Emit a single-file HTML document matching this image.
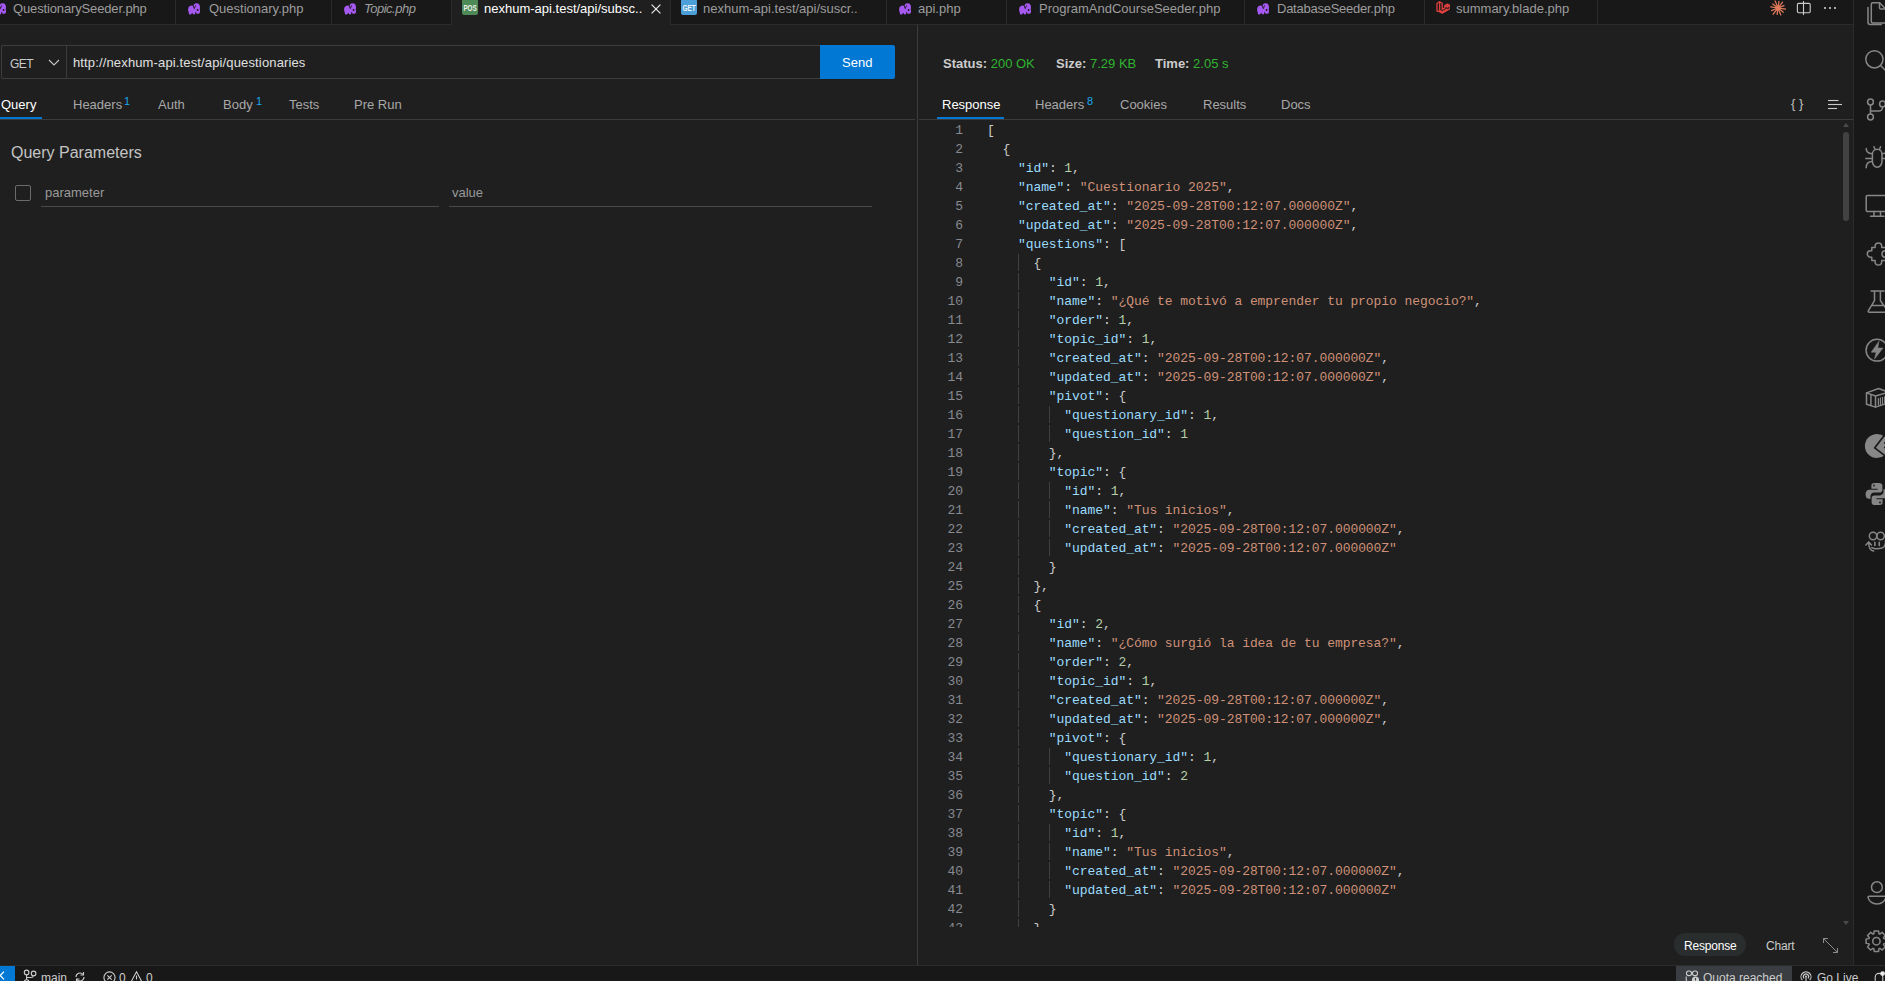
<!DOCTYPE html>
<html><head><meta charset="utf-8">
<style>
*{box-sizing:border-box;margin:0;padding:0}
html,body{width:1885px;height:981px;overflow:hidden;background:#1f1f1f;font-family:"Liberation Sans",sans-serif;font-size:13px;color:#cccccc}
.abs{position:absolute}
#tabs{position:absolute;left:0;top:0;width:1854px;height:25px;background:#181818;border-bottom:1px solid #2b2b2b}
.tab{position:absolute;top:0;height:24px;border-right:1px solid #2b2b2b;color:#9d9d9d;white-space:nowrap}
.tab .t{position:absolute;top:1px;line-height:16px}
.tab.active{background:#1f1f1f;height:25px;color:#ffffff}
.ico{position:absolute}
#act{position:absolute;left:1853px;top:0;width:32px;height:966px;background:#181818;border-left:1px solid #2b2b2b}
#status{position:absolute;left:0;top:965px;width:1885px;height:16px;background:#181818;border-top:1px solid #2b2b2b;color:#cccccc}
#divider{position:absolute;left:917px;top:25px;width:1px;height:940px;background:#3c3c3c}
.hline{position:absolute;height:1px;background:#3c3c3c}
.rtab{position:absolute;top:97px;line-height:16px;color:#a8a8a8;white-space:nowrap}
.rtab.on{color:#ffffff}
.sup{position:absolute;font-size:11px;line-height:12px;color:#1aa7ee}
#code{position:absolute;left:918px;top:121px;width:925px;height:806px;overflow:hidden;font-family:"Liberation Mono",monospace;font-size:13px;letter-spacing:-0.07px}
.ln{position:relative;height:19px;line-height:19px;white-space:pre;color:#cccccc}
.ln .no{position:absolute;left:0;width:45px;text-align:right;color:#878a91}
.ln .tx{position:absolute;left:69px}
.g{position:absolute;top:0;width:1px;height:17px;background:#404040}
.g1{left:100px}.g2{left:131px}
i{font-style:normal}
i.k{color:#9cdcfe}i.s{color:#ce9178}i.n{color:#b5cea8}
</style></head><body>
<div id="tabs">
  <div class="tab" style="left:0;width:176px"><svg class="ico" style="left:-6px;top:3px" width="12" height="12" viewBox="0 0 12 12"><use href="#eleph"/></svg><span class="t" style="left:13px;letter-spacing:-0.14px">QuestionarySeeder.php</span></div>
  <div class="tab" style="left:176px;width:156px"><svg class="ico" style="left:12px;top:3px" width="12" height="12"><use href="#eleph"/></svg><span class="t" style="left:33px">Questionary.php</span></div>
  <div class="tab" style="left:332px;width:120px"><svg class="ico" style="left:12px;top:3px" width="12" height="12"><use href="#eleph"/></svg><span class="t" style="left:32px;font-style:italic;letter-spacing:-0.5px">Topic.php</span></div>
  <div class="tab active" style="left:452px;width:219px"><svg class="ico" style="left:10px;top:0px" width="16" height="15"><rect x="0" y="-1" width="16" height="16" rx="2" fill="#4e8a57"/><text x="1.4" y="10.8" textLength="13.4" lengthAdjust="spacingAndGlyphs" font-family="Liberation Sans" font-weight="bold" font-size="9.4" fill="#eef3ee">POS</text></svg><span class="t" style="left:32px">nexhum-api.test/api/subsc..</span><svg class="ico" style="left:199px;top:4px" width="10" height="10" viewBox="0 0 10 10"><path d="M0.6 0.6l8.8 8.8M9.4 0.6L0.6 9.4" stroke="#e8e8e8" stroke-width="1.25"/></svg></div>
  <div class="tab" style="left:671px;width:216px"><svg class="ico" style="left:10px;top:0px" width="16" height="15"><rect x="0" y="-1" width="16" height="16" rx="2" fill="#4c9fd8"/><text x="1.4" y="10.8" textLength="13.4" lengthAdjust="spacingAndGlyphs" font-family="Liberation Sans" font-weight="bold" font-size="9.4" fill="#eef5fb">GET</text></svg><span class="t" style="left:32px">nexhum-api.test/api/suscr..</span></div>
  <div class="tab" style="left:887px;width:120px"><svg class="ico" style="left:12px;top:3px" width="12" height="12"><use href="#eleph"/></svg><span class="t" style="left:31px">api.php</span></div>
  <div class="tab" style="left:1007px;width:238px"><svg class="ico" style="left:12px;top:3px" width="12" height="12"><use href="#eleph"/></svg><span class="t" style="left:32px">ProgramAndCourseSeeder.php</span></div>
  <div class="tab" style="left:1245px;width:180px"><svg class="ico" style="left:12px;top:3px" width="12" height="12"><use href="#eleph"/></svg><span class="t" style="left:32px;letter-spacing:-0.25px">DatabaseSeeder.php</span></div>
  <div class="tab" style="left:1425px;width:173px"><svg class="ico" style="left:11px;top:1px" width="14" height="14"><use href="#laravel"/></svg><span class="t" style="left:31px">summary.blade.php</span></div>
  <svg class="ico" style="left:1769.5px;top:0px" width="16" height="16" viewBox="0 0 16 16"><g stroke="#e07a5a" stroke-width="1.25" stroke-linecap="round"><line x1="8" y1="8" x2="15.72" y2="9.09"/><line x1="8" y1="8" x2="13.36" y2="12.19"/><line x1="8" y1="8" x2="10.81" y2="14.95"/><line x1="8" y1="8" x2="7.10" y2="14.44"/><line x1="8" y1="8" x2="3.14" y2="14.23"/><line x1="8" y1="8" x2="1.60" y2="10.58"/><line x1="8" y1="8" x2="0.77" y2="6.98"/><line x1="8" y1="8" x2="2.80" y2="3.94"/><line x1="8" y1="8" x2="5.12" y2="0.86"/><line x1="8" y1="8" x2="8.93" y2="1.37"/><line x1="8" y1="8" x2="12.56" y2="2.17"/><line x1="8" y1="8" x2="13.93" y2="5.60"/></g><circle cx="8" cy="8" r="2.6" fill="#e07a5a"/></svg>
  <svg class="ico" style="left:1796px;top:0px" width="16" height="16" viewBox="0 0 16 16"><rect x="1.4" y="3.4" width="12.8" height="9.4" rx="1.2" fill="none" stroke="#cccccc" stroke-width="1.1"/><line x1="7.5" y1="1" x2="7.5" y2="15" stroke="#cccccc" stroke-width="1.1"/></svg>
  <svg class="ico" style="left:1822px;top:2px" width="16" height="12" viewBox="0 0 16 12"><circle cx="3" cy="6" r="1.1" fill="#cccccc"/><circle cx="8" cy="6" r="1.1" fill="#cccccc"/><circle cx="13" cy="6" r="1.1" fill="#cccccc"/></svg>
</div>
<svg width="0" height="0" style="position:absolute">
  <defs>
    <g id="eleph"><g fill="#a659f0"><ellipse cx="4.2" cy="6.4" rx="4.1" ry="3.9"/><ellipse cx="8.6" cy="4.6" rx="3.4" ry="4.4"/><rect x="8.6" y="6" width="3.4" height="4" rx="1.6"/><rect x="8" y="8.4" width="3.6" height="2.4" rx="1.2"/><rect x="0.8" y="7" width="2.8" height="4.4" rx="0.8"/><rect x="4.9" y="7" width="2.3" height="4.4" rx="0.8"/></g><path d="M4.6 1.2 L6.3 5.6 L7.6 2.4" fill="none" stroke="#181818" stroke-width="0.9"/><ellipse cx="9.6" cy="6.9" rx="0.9" ry="1" fill="#181818"/></g>
    <g id="laravel"><path fill="none" stroke="#e0413f" stroke-width="1.3" stroke-linejoin="round" d="M1 2.2l2.6-1.5 2.6 1.5v6.2l2.6-1.5V4.6l2.6-1.5 2.6 1.5v3l-2.6 1.5-5.2 3-2.6-1.5L1 10V2.2zM3.6 0.7v8.6l2.6 1.6 5.2-3M6.2 2.2v6.2M8.8 4.6l2.6 1.5 2.6-1.5M11.4 3.1v3"/></g>
  </defs>
</svg>
<div id="act">
</div>
<svg class="abs" style="left:1854px;top:0" width="31" height="966" viewBox="1854 0 31 966">
<g fill="none" stroke="#878787" stroke-width="1.5" stroke-linecap="round" stroke-linejoin="round">
  <!-- files top 2 -->
  <g transform="translate(1865,2)">
    <path d="M3 5.5v14.8a2.2 2.2 0 0 0 2.2 2.2h11"/>
    <path d="M7.8 0.7h6.7l6.5 6.5v12.3a1.5 1.5 0 0 1-1.5 1.5H7.8a1.5 1.5 0 0 1-1.5-1.5V2.2a1.5 1.5 0 0 1 1.5-1.5z"/>
    <path d="M14.5 0.7v5a1.4 1.4 0 0 0 1.4 1.4h5"/>
  </g>
  <!-- search top 50 -->
  <g transform="translate(1865,50)">
    <circle cx="9.4" cy="9.3" r="8.6"/>
    <path d="M15.6 15.5L23 23"/>
  </g>
  <!-- git top 98 -->
  <g transform="translate(1865,98)">
    <circle cx="5.5" cy="4" r="2.9"/>
    <circle cx="5.5" cy="19" r="2.9"/>
    <circle cx="17.5" cy="6" r="2.9"/>
    <path d="M5.5 6.9v9.2"/>
    <path d="M17.5 8.9v0.6a3.5 3.5 0 0 1-3.5 3.5H5.5"/>
  </g>
  <!-- debug top 146 -->
  <g transform="translate(1865,146)">
    <path d="M12.2 3.2c2.8 0 4.8 2.2 4.8 5.2v6.8c0 3.3-2.2 6-4.8 6s-4.8-2.7-4.8-6V8.4c0-3 2-5.2 4.8-5.2z"/>
    <path d="M0.8 12.4h6.5M1.2 2.5c0 3 1.8 5 6 5.2M7.2 15.5c-4 0-6 2.3-6 6.3M10 3.5L9 0.8M14.5 3.5l1-2.7M17 12.4h6.5M23 2.5c0 3-1.8 5-6 5.2"/>
  </g>
  <!-- monitor top 194 -->
  <g transform="translate(1865,194)">
    <rect x="1.2" y="1.6" width="24" height="15.8" rx="1.2"/>
    <path d="M9 17.5v4.5M15.5 17.5v4.5M5.5 22.2h13.5"/>
  </g>
  <!-- extensions top 242 -->
  <g transform="translate(1865,242)">
    <path d="M6.8 5.5H10.1V4.2A3.3 3.3 0 0 1 16.7 4.2V5.5H21M6.8 5.5V8.7H5.6A3.3 3.3 0 0 0 5.6 15.3H6.8V18.6H10.1V19.8A3.3 3.3 0 0 0 16.7 19.8V18.6H21"/>
    <circle cx="20.2" cy="12" r="3.2"/>
  </g>
  <!-- beaker top 290 -->
  <g transform="translate(1865,290)">
    <path d="M6.1 0.9h13M9.5 1v9.7L3.4 20.6a1 1 0 0 0 0.9 1.6h17.4a1 1 0 0 0 0.9-1.6L15.4 10.7V1M6.6 15.6h12.6"/>
  </g>
  <!-- lightning top 338 -->
  <g transform="translate(1865,338)">
    <circle cx="12" cy="12.2" r="10.9" stroke-width="1.5"/>
    <path d="M13.8 3.4L6.2 14.2h5L9.4 21.2L18 10h-5z" fill="#868686" stroke-width="0.5"/>
  </g>
  <!-- containers top 386 -->
  <g transform="translate(1865,386)">
    <path d="M1.5 6.9L13.6 2.5L25 6.7V16.5L10.5 21.1L1.5 18.2Z"/>
    <path d="M1.5 6.9L10.5 10L25 5.8M10.5 10V21.1M5.9 8.6V19.6"/>
    <path d="M13.4 12.6V19M15.4 11.9V18.4M17.5 11.3V17.8M19.6 10.7V17.2" stroke-width="1.2"/>
  </g>
  <!-- pacman top 434 -->
  <g transform="translate(1865,434)">
    <circle cx="12" cy="12" r="12.1" fill="#878787" stroke="none"/>
    <path d="M20.5 -0.2L9.7 13.9L21.5 23" stroke="#181818" stroke-width="1.6" stroke-linecap="butt" stroke-linejoin="miter"/>
    <rect x="19" y="8.2" width="1.6" height="1.6" fill="#181818" stroke="none"/>
    <rect x="19" y="12.7" width="1.6" height="1.6" fill="#181818" stroke="none"/>
  </g>
  <!-- python top 482 -->
  <g transform="translate(1865,482)" fill="#868686" stroke="none">
    <path d="M10.2 1c-3.6 0-3.8 1.6-3.8 2.6V6.8h6.2v0.9H4.2C2.2 7.7 0.6 9.3 0.6 12.2s1.4 4.6 3.3 4.6h1.6v-2.6c0-2 1.7-3.6 3.7-3.6h5.4c1.6 0 2.8-1.3 2.8-2.9V3.6C17.4 2 16 1 14 1z"/>
    <path d="M13.8 23c3.6 0 3.8-1.6 3.8-2.6v-3.2h-6.2v-0.9h8.4c2 0 3.6-1.6 3.6-4.5s-1.4-4.6-3.3-4.6h-1.6v2.6c0 2-1.7 3.6-3.7 3.6H9.4c-1.6 0-2.8 1.3-2.8 2.9v4.1C6.6 22 8 23 10 23z"/>
    <circle cx="9" cy="3.5" r="0.9" fill="#181818"/>
    <circle cx="15" cy="20.5" r="0.9" fill="#181818"/>
  </g>
  <!-- copilot-ish top 530 -->
  <g transform="translate(1865,530)">
    <circle cx="8.05" cy="6" r="3.7"/>
    <circle cx="15.6" cy="6" r="3.7"/>
    <path d="M9.85 12.4V15.5M14.25 12.4V15.5" stroke-width="1.6"/>
    <path d="M6.8 17.6C9 18.9 13 18.9 17 18.1C19.6 17.5 20.6 15 20.6 10.5"/>
    <path d="M8.7 21.1C5.6 20.8 3.7 18.2 3.7 12.3M0.9 14.9L3.7 11.9L6.5 14.9"/>
  </g>
  <!-- accounts top 881 -->
  <g transform="translate(1865,881)">
    <circle cx="11.9" cy="6.2" r="5.4"/>
    <path d="M4.1 15.2h15.8a1 1 0 0 1 1 1.1c-0.7 3.9-4.4 6.7-8.9 6.7s-8.2-2.8-8.9-6.7a1 1 0 0 1 1-1.1z"/>
  </g>
  <!-- gear top 929 -->
  <g transform="translate(1865,929)">
    <circle cx="11.4" cy="12.2" r="3.7"/>
    <path d="M8.83 4.73L9.22 1.93 L13.58 1.93 L13.97 4.73A7.90 7.90 0 0 1 14.86 5.10L17.12 3.39 L20.21 6.48 L18.50 8.74A7.90 7.90 0 0 1 18.87 9.63L21.67 10.02 L21.67 14.38 L18.87 14.77A7.90 7.90 0 0 1 18.50 15.66L20.21 17.92 L17.12 21.01 L14.86 19.30A7.90 7.90 0 0 1 13.97 19.67L13.58 22.47 L9.22 22.47 L8.83 19.67A7.90 7.90 0 0 1 7.94 19.30L5.68 21.01 L2.59 17.92 L4.30 15.66A7.90 7.90 0 0 1 3.93 14.77L1.13 14.38 L1.13 10.02 L3.93 9.63A7.90 7.90 0 0 1 4.30 8.74L2.59 6.48 L5.68 3.39 L7.94 5.10A7.90 7.90 0 0 1 8.83 4.73 Z"/>
  </g>
</g>
</svg>

<div id="divider"></div>
<!-- request panel -->
<div class="abs" style="left:1px;top:45px;width:820px;height:34px;border:1px solid #3c3c3c;border-right:none;border-radius:2px 0 0 2px"></div>
<div class="abs" style="left:66px;top:46px;width:1px;height:32px;background:#3c3c3c"></div>
<span class="abs" style="left:10px;top:56px;line-height:16px;font-size:12px;letter-spacing:-0.5px;color:#cccccc">GET</span>
<svg class="abs" style="left:48px;top:59px" width="12" height="8" viewBox="0 0 12 8"><path d="M1 1l5 5 5-5" fill="none" stroke="#c5c5c5" stroke-width="1.1"/></svg>
<span class="abs" style="left:73px;top:55px;line-height:16px;color:#e0e0e0;letter-spacing:0.14px">http://nexhum-api.test/api/questionaries</span>
<div class="abs" style="left:820px;top:45px;width:75px;height:34px;background:#0078d4;border-radius:0 2px 2px 0"></div>
<span class="abs" style="left:842px;top:55px;line-height:16px;color:#ffffff">Send</span>

<span class="rtab on" style="left:1px">Query</span>
<div class="abs" style="left:0;top:117px;width:42px;height:2px;background:#0078d4"></div>
<span class="rtab" style="left:73px">Headers</span><span class="sup" style="left:124px;top:95px">1</span>
<span class="rtab" style="left:158px">Auth</span>
<span class="rtab" style="left:223px">Body</span><span class="sup" style="left:256px;top:95px">1</span>
<span class="rtab" style="left:289px">Tests</span>
<span class="rtab" style="left:354px">Pre Run</span>
<div class="hline" style="left:0;top:119px;width:915px"></div>

<span class="abs" style="left:11px;top:144px;font-size:16px;line-height:18px;color:#c4c4c4">Query Parameters</span>
<div class="abs" style="left:15px;top:185px;width:16px;height:16px;border:1px solid #6b6b6b;border-radius:2px"></div>
<span class="abs" style="left:45px;top:185px;line-height:16px;color:#9a9a9a">parameter</span>
<div class="abs" style="left:41px;top:206px;width:398px;height:1px;background:#4a4a4a"></div>
<span class="abs" style="left:452px;top:185px;line-height:16px;color:#9a9a9a">value</span>
<div class="abs" style="left:449px;top:206px;width:423px;height:1px;background:#4a4a4a"></div>

<!-- response panel -->
<span class="abs" style="left:943px;top:56px;line-height:16px;font-weight:bold;color:#cccccc">Status: <span style="font-weight:normal;color:#2fb52f">200 OK</span></span>
<span class="abs" style="left:1056px;top:56px;line-height:16px;font-weight:bold;color:#cccccc">Size: <span style="font-weight:normal;color:#2fb52f">7.29 KB</span></span>
<span class="abs" style="left:1155px;top:56px;line-height:16px;font-weight:bold;color:#cccccc">Time: <span style="font-weight:normal;color:#2fb52f">2.05 s</span></span>

<span class="rtab on" style="left:942px">Response</span>
<div class="abs" style="left:937px;top:117px;width:67px;height:2px;background:#0078d4"></div>
<span class="rtab" style="left:1035px">Headers</span><span class="sup" style="left:1087px;top:95px">8</span>
<span class="rtab" style="left:1120px">Cookies</span>
<span class="rtab" style="left:1203px">Results</span>
<span class="rtab" style="left:1281px">Docs</span>
<span class="abs" style="left:1791px;top:96px;line-height:16px;color:#c0c0c0;font-size:13px;letter-spacing:0px">{ }</span>
<svg class="abs" style="left:1827px;top:99px" width="16" height="11" viewBox="0 0 16 11"><g stroke="#cccccc" stroke-width="1.1"><line x1="1" y1="1.5" x2="11.5" y2="1.5"/><line x1="1" y1="5.5" x2="15" y2="5.5"/><line x1="1" y1="9.5" x2="10" y2="9.5"/></g></svg>
<div class="hline" style="left:919px;top:119px;width:934px"></div>

<div id="code">
<div class="ln"><span class="no">1</span><span class="tx">[</span></div>
<div class="ln"><span class="no">2</span><span class="tx">  {</span></div>
<div class="ln"><span class="no">3</span><span class="tx">    <i class="k">&quot;id&quot;</i>: <i class="n">1</i>,</span></div>
<div class="ln"><span class="no">4</span><span class="tx">    <i class="k">&quot;name&quot;</i>: <i class="s">&quot;Cuestionario 2025&quot;</i>,</span></div>
<div class="ln"><span class="no">5</span><span class="tx">    <i class="k">&quot;created_at&quot;</i>: <i class="s">&quot;2025-09-28T00:12:07.000000Z&quot;</i>,</span></div>
<div class="ln"><span class="no">6</span><span class="tx">    <i class="k">&quot;updated_at&quot;</i>: <i class="s">&quot;2025-09-28T00:12:07.000000Z&quot;</i>,</span></div>
<div class="ln"><span class="no">7</span><span class="tx">    <i class="k">&quot;questions&quot;</i>: [</span></div>
<div class="ln"><span class="no">8</span><b class="g g1"></b><span class="tx">      {</span></div>
<div class="ln"><span class="no">9</span><b class="g g1"></b><span class="tx">        <i class="k">&quot;id&quot;</i>: <i class="n">1</i>,</span></div>
<div class="ln"><span class="no">10</span><b class="g g1"></b><span class="tx">        <i class="k">&quot;name&quot;</i>: <i class="s">&quot;¿Qué te motivó a emprender tu propio negocio?&quot;</i>,</span></div>
<div class="ln"><span class="no">11</span><b class="g g1"></b><span class="tx">        <i class="k">&quot;order&quot;</i>: <i class="n">1</i>,</span></div>
<div class="ln"><span class="no">12</span><b class="g g1"></b><span class="tx">        <i class="k">&quot;topic_id&quot;</i>: <i class="n">1</i>,</span></div>
<div class="ln"><span class="no">13</span><b class="g g1"></b><span class="tx">        <i class="k">&quot;created_at&quot;</i>: <i class="s">&quot;2025-09-28T00:12:07.000000Z&quot;</i>,</span></div>
<div class="ln"><span class="no">14</span><b class="g g1"></b><span class="tx">        <i class="k">&quot;updated_at&quot;</i>: <i class="s">&quot;2025-09-28T00:12:07.000000Z&quot;</i>,</span></div>
<div class="ln"><span class="no">15</span><b class="g g1"></b><span class="tx">        <i class="k">&quot;pivot&quot;</i>: {</span></div>
<div class="ln"><span class="no">16</span><b class="g g1"></b><b class="g g2"></b><span class="tx">          <i class="k">&quot;questionary_id&quot;</i>: <i class="n">1</i>,</span></div>
<div class="ln"><span class="no">17</span><b class="g g1"></b><b class="g g2"></b><span class="tx">          <i class="k">&quot;question_id&quot;</i>: <i class="n">1</i></span></div>
<div class="ln"><span class="no">18</span><b class="g g1"></b><span class="tx">        },</span></div>
<div class="ln"><span class="no">19</span><b class="g g1"></b><span class="tx">        <i class="k">&quot;topic&quot;</i>: {</span></div>
<div class="ln"><span class="no">20</span><b class="g g1"></b><b class="g g2"></b><span class="tx">          <i class="k">&quot;id&quot;</i>: <i class="n">1</i>,</span></div>
<div class="ln"><span class="no">21</span><b class="g g1"></b><b class="g g2"></b><span class="tx">          <i class="k">&quot;name&quot;</i>: <i class="s">&quot;Tus inicios&quot;</i>,</span></div>
<div class="ln"><span class="no">22</span><b class="g g1"></b><b class="g g2"></b><span class="tx">          <i class="k">&quot;created_at&quot;</i>: <i class="s">&quot;2025-09-28T00:12:07.000000Z&quot;</i>,</span></div>
<div class="ln"><span class="no">23</span><b class="g g1"></b><b class="g g2"></b><span class="tx">          <i class="k">&quot;updated_at&quot;</i>: <i class="s">&quot;2025-09-28T00:12:07.000000Z&quot;</i></span></div>
<div class="ln"><span class="no">24</span><b class="g g1"></b><span class="tx">        }</span></div>
<div class="ln"><span class="no">25</span><b class="g g1"></b><span class="tx">      },</span></div>
<div class="ln"><span class="no">26</span><b class="g g1"></b><span class="tx">      {</span></div>
<div class="ln"><span class="no">27</span><b class="g g1"></b><span class="tx">        <i class="k">&quot;id&quot;</i>: <i class="n">2</i>,</span></div>
<div class="ln"><span class="no">28</span><b class="g g1"></b><span class="tx">        <i class="k">&quot;name&quot;</i>: <i class="s">&quot;¿Cómo surgió la idea de tu empresa?&quot;</i>,</span></div>
<div class="ln"><span class="no">29</span><b class="g g1"></b><span class="tx">        <i class="k">&quot;order&quot;</i>: <i class="n">2</i>,</span></div>
<div class="ln"><span class="no">30</span><b class="g g1"></b><span class="tx">        <i class="k">&quot;topic_id&quot;</i>: <i class="n">1</i>,</span></div>
<div class="ln"><span class="no">31</span><b class="g g1"></b><span class="tx">        <i class="k">&quot;created_at&quot;</i>: <i class="s">&quot;2025-09-28T00:12:07.000000Z&quot;</i>,</span></div>
<div class="ln"><span class="no">32</span><b class="g g1"></b><span class="tx">        <i class="k">&quot;updated_at&quot;</i>: <i class="s">&quot;2025-09-28T00:12:07.000000Z&quot;</i>,</span></div>
<div class="ln"><span class="no">33</span><b class="g g1"></b><span class="tx">        <i class="k">&quot;pivot&quot;</i>: {</span></div>
<div class="ln"><span class="no">34</span><b class="g g1"></b><b class="g g2"></b><span class="tx">          <i class="k">&quot;questionary_id&quot;</i>: <i class="n">1</i>,</span></div>
<div class="ln"><span class="no">35</span><b class="g g1"></b><b class="g g2"></b><span class="tx">          <i class="k">&quot;question_id&quot;</i>: <i class="n">2</i></span></div>
<div class="ln"><span class="no">36</span><b class="g g1"></b><span class="tx">        },</span></div>
<div class="ln"><span class="no">37</span><b class="g g1"></b><span class="tx">        <i class="k">&quot;topic&quot;</i>: {</span></div>
<div class="ln"><span class="no">38</span><b class="g g1"></b><b class="g g2"></b><span class="tx">          <i class="k">&quot;id&quot;</i>: <i class="n">1</i>,</span></div>
<div class="ln"><span class="no">39</span><b class="g g1"></b><b class="g g2"></b><span class="tx">          <i class="k">&quot;name&quot;</i>: <i class="s">&quot;Tus inicios&quot;</i>,</span></div>
<div class="ln"><span class="no">40</span><b class="g g1"></b><b class="g g2"></b><span class="tx">          <i class="k">&quot;created_at&quot;</i>: <i class="s">&quot;2025-09-28T00:12:07.000000Z&quot;</i>,</span></div>
<div class="ln"><span class="no">41</span><b class="g g1"></b><b class="g g2"></b><span class="tx">          <i class="k">&quot;updated_at&quot;</i>: <i class="s">&quot;2025-09-28T00:12:07.000000Z&quot;</i></span></div>
<div class="ln"><span class="no">42</span><b class="g g1"></b><span class="tx">        }</span></div>
<div class="ln"><span class="no">43</span><b class="g g1"></b><span class="tx">      },</span></div></div>
<!-- scrollbar -->
<svg class="abs" style="left:1842px;top:122px" width="8" height="6"><path d="M1 5l3-4 3 4z" fill="#4a4a4a"/></svg>
<div class="abs" style="left:1843px;top:132px;width:6px;height:89px;background:#424242;border-radius:3px"></div>
<svg class="abs" style="left:1842px;top:920px" width="8" height="6"><path d="M1 1l3 4 3-4z" fill="#4a4a4a"/></svg>

<div class="abs" style="left:1674px;top:933px;width:72px;height:23px;background:#2a2d2e;border-radius:11px"></div>
<span class="abs" style="left:1684px;top:938px;line-height:16px;font-size:12px;letter-spacing:-0.2px;color:#ffffff">Response</span>
<span class="abs" style="left:1766px;top:938px;line-height:16px;font-size:12px;letter-spacing:-0.2px;color:#cccccc">Chart</span>
<svg class="abs" style="left:1822px;top:937px" width="17" height="17" viewBox="0 0 17 17"><g fill="none" stroke="#8c8c8c" stroke-width="1"><path d="M1.5 1.5l14 14M1.5 1.5v4.5M1.5 1.5h4.5M15.5 15.5v-4.5M15.5 15.5h-4.5"/></g></svg>

<div id="status" style="font-size:12px">
  <div class="abs" style="left:0;top:0;width:15px;height:16px;background:#0078d4"></div>
  <svg class="abs" style="left:0;top:4px" width="10" height="14" viewBox="0 0 10 14"><path d="M4 1.6L0.2 5.5L4 9.4" fill="none" stroke="#ffffff" stroke-width="1.2"/></svg>
  <svg class="abs" style="left:23px;top:3px" width="14" height="14" viewBox="0 0 14 14"><g fill="none" stroke="#cccccc" stroke-width="1.1"><circle cx="3.6" cy="3.4" r="2.3"/><circle cx="10.6" cy="4.4" r="2.3"/><circle cx="3.6" cy="13" r="2.3"/><path d="M3.6 5.7v5M10.4 6.7c-0.2 1.5-1 1.8-2.5 1.8H3.6"/></g></svg>
  <span class="abs" style="left:41px;top:4px;line-height:16px">main</span>
  <svg class="abs" style="left:74px;top:5px" width="12" height="12" viewBox="0 0 12 12"><path d="M10 6a4 4 0 0 1-7 2.6M2 6a4 4 0 0 1 7-2.6" fill="none" stroke="#cccccc" stroke-width="1.1"/><path d="M9.5 1v3h-3M2.5 11V8h3" fill="none" stroke="#cccccc" stroke-width="1.1"/></svg>
  <svg class="abs" style="left:103px;top:5px" width="13" height="13" viewBox="0 0 13 13"><circle cx="6.5" cy="6.5" r="5.6" fill="none" stroke="#cccccc" stroke-width="1.1"/><path d="M4.3 4.3l4.4 4.4M8.7 4.3l-4.4 4.4" stroke="#cccccc" stroke-width="1.1"/></svg>
  <span class="abs" style="left:119px;top:4px;line-height:16px">0</span>
  <svg class="abs" style="left:130px;top:5px" width="13" height="13" viewBox="0 0 13 13"><path d="M6.5 0.8l5.8 10.8H0.7z" fill="none" stroke="#cccccc" stroke-width="1.1"/><path d="M6.5 4.5v4" stroke="#cccccc" stroke-width="1.1"/></svg>
  <span class="abs" style="left:146px;top:4px;line-height:16px">0</span>

  <div class="abs" style="left:1676px;top:0;width:116px;height:16px;background:#3a3d41"></div>
  <svg class="abs" style="left:1685px;top:4px" width="15" height="12" viewBox="0 0 15 12"><g fill="none" stroke="#cccccc" stroke-width="1.1"><rect x="1.5" y="1" width="5" height="4.6" rx="2.2"/><rect x="7.5" y="1" width="5" height="4.6" rx="2.2"/><path d="M1.2 6.5v3a2.5 2.5 0 0 0 2.5 2.5h2.5"/></g><circle cx="10.5" cy="10" r="3.6" fill="#cccccc"/><path d="M10.5 8v2.5" stroke="#3a3d41" stroke-width="1.1"/></svg>
  <span class="abs" style="left:1703px;top:4px;line-height:16px">Quota reached</span>
  <svg class="abs" style="left:1800px;top:5px" width="12" height="12" viewBox="0 0 12 12"><g fill="none" stroke="#cccccc" stroke-width="1.1"><path d="M2.3 9.2A5 5 0 1 1 9.7 9.2"/><path d="M4 7.3A2.6 2.6 0 1 1 8 7.3"/><path d="M6 6.2v6"/></g><circle cx="6" cy="5.6" r="1" fill="#cccccc"/></svg>
  <span class="abs" style="left:1817px;top:4px;line-height:16px">Go Live</span>
  <svg class="abs" style="left:1873px;top:5px" width="12" height="12" viewBox="0 0 12 12"><path d="M1 10.5h10M2.2 10.5V6.2a3.8 3.8 0 0 1 7.6 0v4.3" fill="none" stroke="#cccccc" stroke-width="1.1"/><circle cx="9.6" cy="2.6" r="2.4" fill="#e8e8e8"/></svg>
</div>
</body></html>
